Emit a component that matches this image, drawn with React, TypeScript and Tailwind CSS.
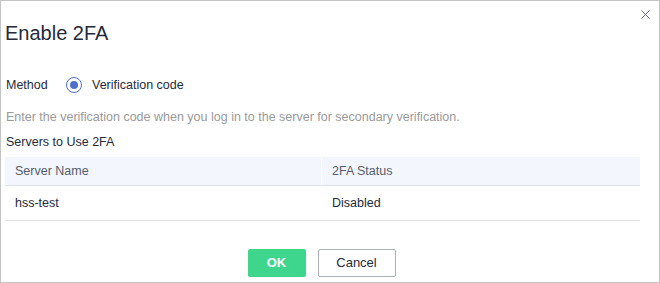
import { X } from 'lucide-react'

export default function App() {
  const rows = [{ name: 'hss-test', status: 'Disabled' }]

  return (
    <div className="w-[660px] h-[283px] bg-white border border-[#c4c4c4] relative text-[#252b3a]" style={{ fontFamily: '"Liberation Sans", Arial, sans-serif' }}>
      <button className="absolute top-[6px] right-[6px] text-[#5f6470]">
        <X size={15} strokeWidth={1.5} />
      </button>

      <div className="pl-[4px] pr-[19px]">
        {/* Title */}
        <h1 className="pt-[21px] text-[20px] leading-[22px] text-[#252b3a]">Enable 2FA</h1>

        {/* Method */}
        <div className="flex items-center mt-[31px] h-[20px] text-[12.5px]">
          <span className="w-[61px] pl-[1px]">Method</span>
          <span className="w-[16px] h-[16px] rounded-full border border-[#526ecc] flex items-center justify-center">
            <span className="w-[8px] h-[8px] rounded-full bg-[#526ecc]" />
          </span>
          <span className="ml-[10px]">Verification code</span>
        </div>

        <p className="mt-[14px] text-[12.5px] leading-[16px] text-[#9a9a9a] pl-[1px]">
          Enter the verification code when you log in to the server for secondary verification.
        </p>
        <p className="mt-[9px] text-[12.5px] leading-[16px] pl-[1px]">Servers to Use 2FA</p>

        {/* Table */}
        <div className="mt-[7px] text-[12.5px]">
          <div className="grid grid-cols-[317px_1fr] h-[29px] bg-[#f3f6fc] border-b border-[#dfe1e6] text-[#575d6c]">
            <div className="flex items-center pl-[10px] border-r border-white">Server Name</div>
            <div className="flex items-center pl-[10px]">2FA Status</div>
          </div>
          {rows.map(r => (
            <div key={r.name} className="grid grid-cols-[317px_1fr] h-[35px] border-b border-[#dfe1e6]">
              <div className="flex items-center pl-[10px]">{r.name}</div>
              <div className="flex items-center pl-[10px]">{r.status}</div>
            </div>
          ))}
        </div>

        {/* Footer */}
        <div className="flex justify-center gap-[12px] mt-[28px] pr-[2px]">
          <button className="w-[58px] h-[28px] rounded-[2px] bg-[#3dd68c] text-white text-[13px] font-bold">OK</button>
          <button className="w-[78px] h-[28px] rounded-[2px] border border-[#adb0b8] text-[#252b3a] text-[13px]">Cancel</button>
        </div>
      </div>
    </div>
  )
}
